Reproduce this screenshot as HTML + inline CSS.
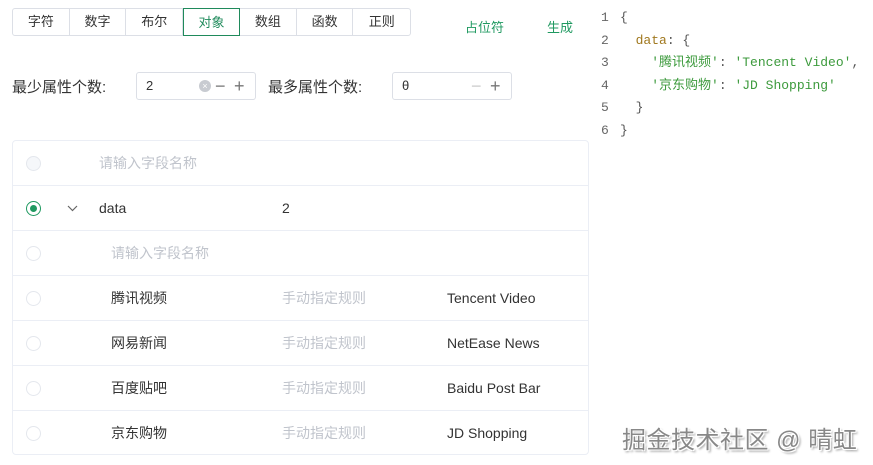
<!DOCTYPE html>
<html><head><meta charset="utf-8"><style>
*{box-sizing:border-box;margin:0;padding:0}
body{width:873px;height:465px;background:#fff;font-family:"Liberation Sans","Noto Sans CJK SC",sans-serif;font-size:13px;color:#333;position:relative;overflow:hidden}
.abs{position:absolute}
.tabs{left:12px;top:8px;height:28px;display:flex;border:1px solid #dcdfe6;border-radius:3px}
.tabs div{width:56.7px;height:26px;line-height:26px;text-align:center;border-right:1px solid #dcdfe6;color:#333}
.tabs div:last-child{border-right:none}
.tabs .on{border:1px solid #1f8a5b;color:#1f8a5b;margin:-1px 0;height:28px;line-height:28px;width:57px}
.green{color:#1f9960}
.lbl{font-size:15px;color:#333}
.inp{height:28px;width:120px;border:1px solid #dcdfe6;border-radius:3px;padding-left:9px;line-height:26px;font-size:13px}
.table{left:12px;top:140px;width:577px;height:315px;border:1px solid #ebeef5;border-radius:4px}
.row{position:absolute;left:0;width:575px;height:45px;border-bottom:1px solid #ebeef5}
.row:last-child{border-bottom:none}
.radio{position:absolute;left:13px;top:15px;width:15px;height:15px;border-radius:50%;border:1px solid #e4e7ed}
.t{position:absolute;top:0;line-height:45px;font-size:14px}
.ph{color:#c0c4cc}
.code{font-family:"Liberation Mono","Noto Sans CJK SC",monospace;font-size:13px;line-height:22.5px}
.ln{color:#666;left:601px}
</style></head><body>
<div class="abs tabs"><div>字符</div><div>数字</div><div>布尔</div><div class="on">对象</div><div>数组</div><div>函数</div><div>正则</div></div>
<div class="abs green" style="left:465px;top:17px">占位符</div>
<div class="abs green" style="left:547px;top:17px">生成</div>

<div class="abs lbl" style="left:12px;top:76px">最少属性个数:</div>
<div class="abs inp" style="left:136px;top:72px">2
<span class="abs" style="left:62px;top:7px;width:12px;height:12px;border-radius:50%;background:#c8cbd1;color:#fff;font-size:9px;line-height:12px;text-align:center">×</span>
<span class="abs" style="left:78px;top:0;color:#777;font-size:18px">−</span>
<span class="abs" style="left:97px;top:0;color:#777;font-size:18px">+</span></div>
<div class="abs lbl" style="left:268px;top:76px">最多属性个数:</div>
<div class="abs inp" style="left:392px;top:72px">θ
<span class="abs" style="left:78px;top:0;color:#ccc;font-size:18px">−</span>
<span class="abs" style="left:97px;top:0;color:#777;font-size:18px">+</span></div>

<div class="abs table">
<div class="row" style="top:0"><div class="radio" style="background:#f5f7fa"></div><div class="t ph" style="left:86px">请输入字段名称</div></div>
<div class="row" style="top:45px"><div class="radio" style="border-color:#1f9960;border-width:1.5px"><span style="position:absolute;left:3px;top:3px;width:7px;height:7px;border-radius:50%;background:#1f9960"></span></div>
<svg class="abs" style="left:54px;top:19px" width="11" height="7"><path d="M1 1L5.5 5.5L10 1" stroke="#666" fill="none" stroke-width="1.2"/></svg>
<div class="t" style="left:86px">data</div><div class="t" style="left:269px">2</div></div>
<div class="row" style="top:90px"><div class="radio"></div><div class="t ph" style="left:98px">请输入字段名称</div></div>
<div class="row" style="top:135px"><div class="radio"></div><div class="t" style="left:98px">腾讯视频</div><div class="t ph" style="left:269px">手动指定规则</div><div class="t" style="left:434px">Tencent Video</div></div>
<div class="row" style="top:180px"><div class="radio"></div><div class="t" style="left:98px">网易新闻</div><div class="t ph" style="left:269px">手动指定规则</div><div class="t" style="left:434px">NetEase News</div></div>
<div class="row" style="top:225px"><div class="radio"></div><div class="t" style="left:98px">百度贴吧</div><div class="t ph" style="left:269px">手动指定规则</div><div class="t" style="left:434px">Baidu Post Bar</div></div>
<div class="row" style="top:270px"><div class="radio"></div><div class="t" style="left:98px">京东购物</div><div class="t ph" style="left:269px">手动指定规则</div><div class="t" style="left:434px">JD Shopping</div></div>
</div>

<div class="abs code ln" style="top:7px">1<br>2<br>3<br>4<br>5<br>6</div>
<div class="abs code" style="left:620px;top:7px;color:#555;white-space:pre">{
  <span style="color:#a0781e">data</span>: {
    <span style="color:#3c9a3c">'腾讯视频'</span>: <span style="color:#3c9a3c">'Tencent Video'</span>,
    <span style="color:#3c9a3c">'京东购物'</span>: <span style="color:#3c9a3c">'JD Shopping'</span>
  }
}</div>

<div class="abs" style="left:622px;top:420px;font-size:24px;color:#888;text-shadow:1px 1px 0 #fff,-1px -1px 0 #fff,1px -1px 0 #fff,-1px 1px 0 #fff,2px 2px 2px #999;letter-spacing:0.5px">掘金技术社区 @ 晴虹</div>
</body></html>
